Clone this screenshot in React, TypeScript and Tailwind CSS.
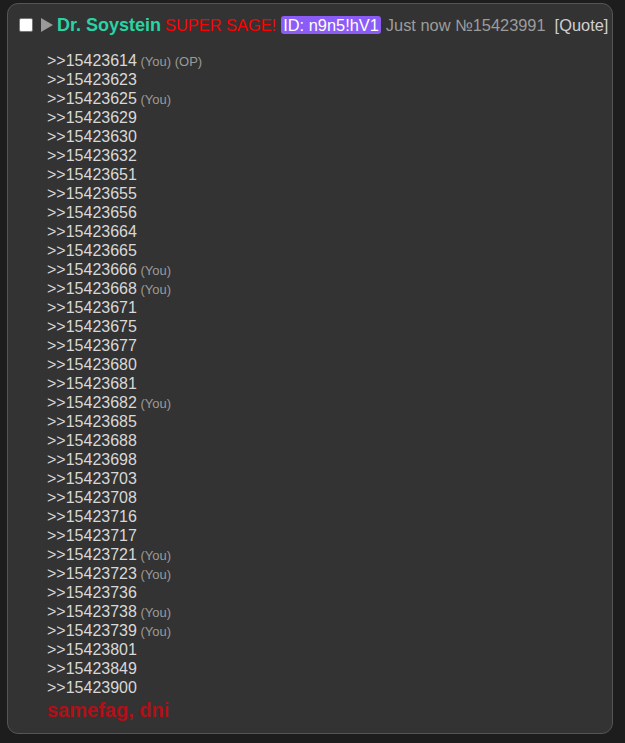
import React from "react";

const refs: [string, string?][] = [
  ["15423614", "(You) (OP)"],
  ["15423623"],
  ["15423625", "(You)"],
  ["15423629"],
  ["15423630"],
  ["15423632"],
  ["15423651"],
  ["15423655"],
  ["15423656"],
  ["15423664"],
  ["15423665"],
  ["15423666", "(You)"],
  ["15423668", "(You)"],
  ["15423671"],
  ["15423675"],
  ["15423677"],
  ["15423680"],
  ["15423681"],
  ["15423682", "(You)"],
  ["15423685"],
  ["15423688"],
  ["15423698"],
  ["15423703"],
  ["15423708"],
  ["15423716"],
  ["15423717"],
  ["15423721", "(You)"],
  ["15423723", "(You)"],
  ["15423736"],
  ["15423738", "(You)"],
  ["15423739", "(You)"],
  ["15423801"],
  ["15423849"],
  ["15423900"],
];

export default function App() {
  return (
    <div
      className="min-h-[743px] bg-[#1d1d1d] pl-[7px] pt-[3px]"
      style={{ fontFamily: '"Liberation Sans", Arial, sans-serif' }}
    >
      <div className="w-[606px] h-[731px] rounded-[11px] border border-[#555] bg-[#333] pl-[11px] pt-[10px]">
        {/* header */}
        <div className="flex items-center h-[22px] text-[16.4px] leading-[22px]">
          <span className="w-[14px] h-[14px] rounded-[2px] bg-white border border-[#777] mr-[8px]" />
          <svg width="12" height="14" viewBox="0 0 12 14" className="mr-[4px]">
            <polygon points="0,0 12,7 0,14" fill="#9a9a9a" />
          </svg>
          <span className="font-bold text-[18px] text-[#2ad3a4]">Dr. Soystein</span>
          <span className="ml-[4px] text-[#ff0000]">SUPER SAGE!</span>
          <span className="ml-[5px] bg-[#8b5cf6] text-white rounded-[3px] px-[2px] leading-[18px]">
            ID: n9n5!hV1
          </span>
          <span className="ml-[5px] text-[#9c9c9c]">Just now №15423991</span>
          <span className="ml-[9px] text-[#d0d0d0]">[Quote]</span>
        </div>

        {/* body */}
        <div className="pl-[28px] pt-[15px] text-[16px] text-[#d8d8d8]">
          {refs.map(([n, tag]) => (
            <div key={n} className="h-[19px] leading-[19px]">
              &gt;&gt;{n}
              {tag && (
                <span className="text-[13px] leading-none text-[#9a9a9a]"> {tag}</span>
              )}
            </div>
          ))}
          <div className="mt-[3px] text-[20px] leading-[20px] font-bold text-[#b30f17]">
            samefag, dni
          </div>
        </div>
      </div>
    </div>
  );
}
